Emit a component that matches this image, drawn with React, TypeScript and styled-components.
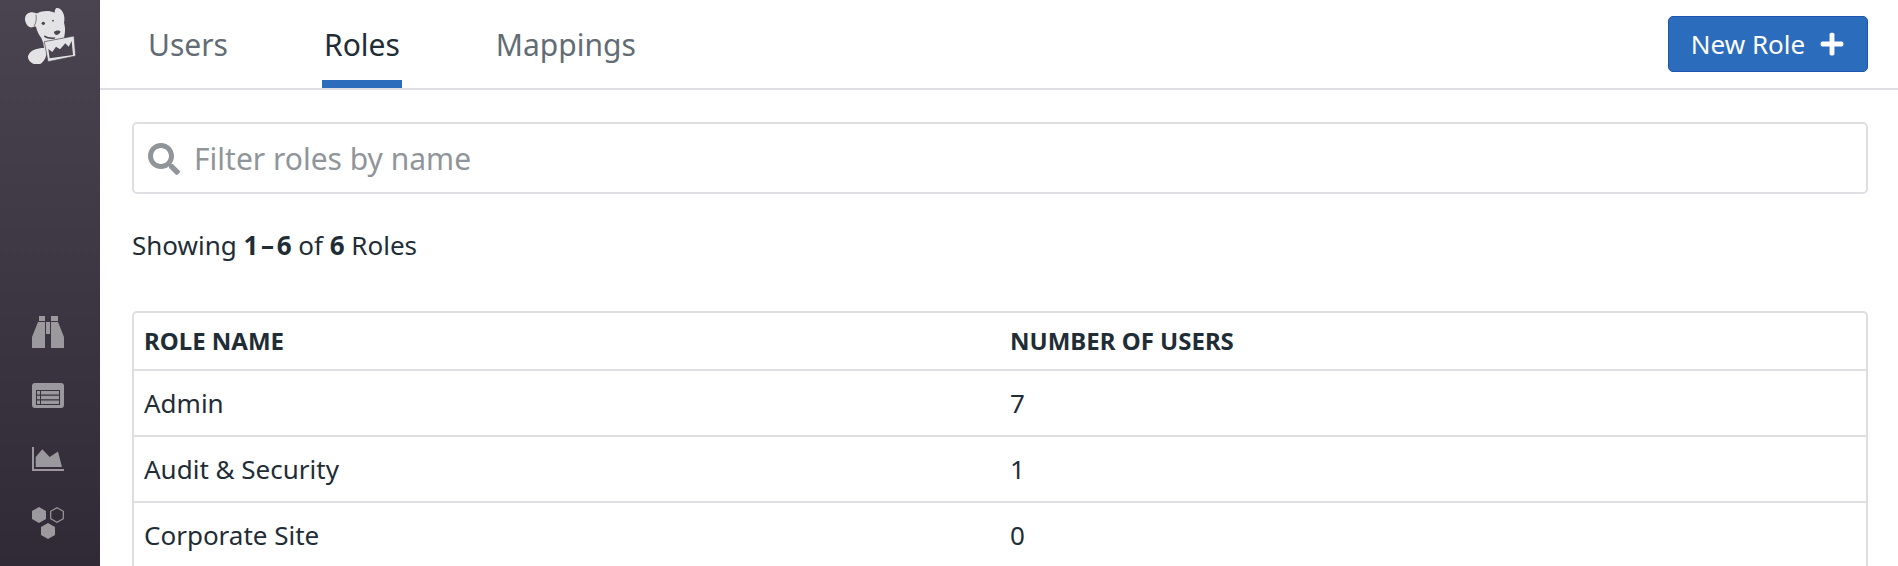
import React from "react";
import styled, { createGlobalStyle } from "styled-components";
import { FaPlus, FaSearch } from "react-icons/fa";

const GlobalStyle = createGlobalStyle`
  html, body {
    margin: 0;
    padding: 0;
    height: 100%;
    overflow: hidden;
    background: #fff;
  }
  body {
    font-family: "Noto Sans", "Open Sans", sans-serif;
    color: #1f2d37;
  }
`;

const Page = styled.div`
  display: flex;
  height: 566px;
  overflow: hidden;
`;

const Sidebar = styled.nav`
  width: 100px;
  flex: none;
  display: flex;
  flex-direction: column;
  align-items: center;
  padding-top: 6px;
  box-sizing: border-box;
  background: linear-gradient(180deg, #49444f 0%, #2f2a36 100%);
`;

const Logo = styled.svg`
  width: 54px;
  height: 58px;
  margin: 0 0 252px 2px;
`;

const NavIcon = styled.svg<{ $h: number; $gap: number }>`
  width: 32px;
  height: ${(p) => p.$h}px;
  margin: 0 4px ${(p) => p.$gap}px 0;
  fill: #9b999e;
`;

const Main = styled.main`
  flex: 1;
  min-width: 0;
`;

const Header = styled.header`
  height: 88px;
  display: flex;
  align-items: stretch;
  justify-content: space-between;
  padding: 0 30px 0 46px;
  border-bottom: 2px solid #dfdfe3;
`;

const Tabs = styled.div`
  display: flex;
  gap: 92px;
`;

const Tab = styled.a<{ $active?: boolean }>`
  height: 88px;
  box-sizing: border-box;
  padding: 24px 2px 0;
  font-size: 30px;
  line-height: 42px;
  color: ${(p) => (p.$active ? "#1f2d37" : "#626c75")};
  border-bottom: 8px solid ${(p) => (p.$active ? "#2b6cbc" : "transparent")};
`;

const NewButton = styled.button`
  align-self: flex-start;
  margin-top: 16px;
  width: 200px;
  height: 56px;
  display: flex;
  align-items: center;
  justify-content: center;
  gap: 14px;
  box-sizing: border-box;
  border: 1px solid #1f55b0;
  border-radius: 5px;
  background: #2b6cbc;
  color: #fff;
  font-family: inherit;
  font-size: 26px;
  padding: 0;
`;

const Content = styled.section`
  padding: 32px 30px 0 32px;
`;

const SearchBox = styled.label`
  display: flex;
  align-items: center;
  gap: 14px;
  height: 72px;
  box-sizing: border-box;
  padding: 1px 14px 0;
  border: 2px solid #dfdfe3;
  border-radius: 5px;
  color: #8f9599;
  font-size: 30px;
`;

const Summary = styled.p`
  margin: 34px 0 0;
  height: 34px;
  font-size: 26px;
  line-height: 34px;
  color: #1f2d37;
  b {
    font-weight: 700;
  }
`;

const Table = styled.div`
  margin-top: 49px;
  border: 2px solid #dfdfe3;
  border-bottom: 0;
  border-radius: 5px 5px 0 0;
`;

const Row = styled.div<{ $head?: boolean }>`
  display: grid;
  grid-template-columns: 866px 1fr;
  height: ${(p) => (p.$head ? 54 : 64)}px;
  padding: ${(p) => (p.$head ? "0 10px 2px" : "0 10px")};
  align-items: center;
  font-size: ${(p) => (p.$head ? 24 : 26)}px;
  font-weight: ${(p) => (p.$head ? 700 : 400)};
  text-transform: ${(p) => (p.$head ? "uppercase" : "none")};
  border-bottom: 2px solid #dfdfe3;
`;

const roles: [string, number][] = [
  ["Admin", 7],
  ["Audit & Security", 1],
  ["Corporate Site", 0],
];

export default function App() {
  return (
    <Page>
      <GlobalStyle />
      <Sidebar>
        <Logo viewBox="0 0 162 174">
          <path
            fill="#e3e3e5"
            d="M36 22C22 14 6 20 3 36c-1 16 11 30 21 28 6-2 10-4 12-2 4 16 10 26 16 34l6 16 2 14c-20 0-42 6-48 24-2 16 18 28 32 26 12-4 22-18 24-36l-2-32 54-12c2-12 6-26 0-46 2-10 2-20-4-32-6-10-18-16-22-8-2 4-2 8-2 10-16-8-38-6-52 2z"
          />
          <path fill="none" stroke="#49444f" strokeWidth="2" d="M36 26c2 14 0 26-6 34" />
          <circle cx="58" cy="52" r="5" fill="#49444f" />
          <circle cx="87" cy="44" r="2.5" fill="#49444f" />
          <path fill="#49444f" d="M90 78c4-5 16-6 19-2 1 6-7 11-12 11-5-1-7-5-7-9zM62 88c8 6 20 8 32 6l-2 4c-12 2-24 0-32-6z" />
          <path fill="#e3e3e5" stroke="#49444f" strokeWidth="2" d="M61 107l89-17 5 60-83 17z" />
          <path fill="#49444f" d="M77 157l-4-28 12 9 11-16 12 8 16-18 10 10 9-17 4 42z" />
        </Logo>
        <NavIcon $h={32} $gap={35} viewBox="0 0 32 32">
          <path d="M7 0h6v5H7zM19 0h7v5h-7zM6 6h7v26H0V21zM26 6h-7v26h13V21zM14 6h4v12h-4z" />
        </NavIcon>
        <NavIcon $h={25} $gap={39} viewBox="0 0 32 25">
          <path
            fillRule="evenodd"
            d="M3 0h26a3 3 0 0 1 3 3v19a3 3 0 0 1-3 3H3a3 3 0 0 1-3-3V3a3 3 0 0 1 3-3zm1 7v15h24V7zm1 1h3v3.500H5zm4 0h18v3.500H9zM5 12.750h3v3.500H5zm4 0h18v3.500H9zM5 17.500h3V21H5zm4 0h18V21H9z"
          />
        </NavIcon>
        <NavIcon $h={24} $gap={36} viewBox="0 0 32 24">
          <path d="M0 0h2v22h30v2H0z" />
          <path d="M3.700 20V10l6.600-7.700L17.700 10 26 4.500 30 20z" />
        </NavIcon>
        <NavIcon $h={32} $gap={0} viewBox="0 0 32 32">
          <path d="M7 0l7 4v8l-7 4-7-4V4z" />
          <path d="M16 16l7 4v8l-7 4-7-4v-8z" />
          <path fill="none" stroke="#9b999e" strokeWidth="1.2" d="M25 .7l6.300 3.600v7.400L25 15.300l-6.300-3.600V4.300z" />
        </NavIcon>
      </Sidebar>
      <Main>
        <Header>
          <Tabs>
            <Tab>Users</Tab>
            <Tab $active>Roles</Tab>
            <Tab>Mappings</Tab>
          </Tabs>
          <NewButton>
            New Role <FaPlus size={26} />
          </NewButton>
        </Header>
        <Content>
          <SearchBox>
            <FaSearch size={32} color="#8f9599" />
            Filter roles by name
          </SearchBox>
          <Summary>
            Showing <b>1{"\u200a"}–{"\u200a"}6</b> of <b>6</b> Roles
          </Summary>
          <Table>
            <Row $head>
              <span>Role Name</span>
              <span>Number of Users</span>
            </Row>
            {roles.map(([name, count]) => (
              <Row key={name}>
                <span>{name}</span>
                <span>{count}</span>
              </Row>
            ))}
          </Table>
        </Content>
      </Main>
    </Page>
  );
}
